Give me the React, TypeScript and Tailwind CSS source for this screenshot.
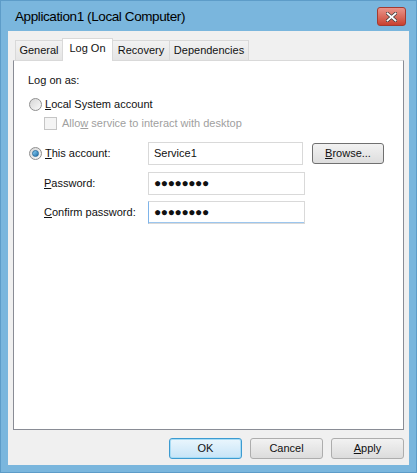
import React from "react";

const font = { fontFamily: '"Liberation Sans", Arial, sans-serif' };

function Radio({ checked }: { checked?: boolean }) {
  return (
    <span className="inline-flex h-[13px] w-[13px] shrink-0 items-center justify-center rounded-full border border-[#8f8f8f] bg-gradient-to-br from-[#d6d6d6] to-[#fafafa]">
      {checked && <span className="h-[7px] w-[7px] rounded-full border border-[#2a6fa0] bg-gradient-to-br from-[#8ad2f7] to-[#1c6fa8]" />}
    </span>
  );
}

function Dots() {
  return <span className="text-[12px] font-bold tracking-[-0.4px] text-[#111]">●●●●●●●●</span>;
}

function Btn({ children, primary }: { children: React.ReactNode; primary?: boolean }) {
  return (
    <div
      className={
        "h-[21px] w-[73px] rounded-[3px] flex items-center justify-center border " +
        (primary
          ? "border-[#3c9bd1] bg-gradient-to-b from-[#eaf6fd] to-[#c6e4f7] shadow-[inset_0_0_0_1px_#a7dcf5]"
          : "border-[#adadad] bg-gradient-to-b from-[#f2f2f2] to-[#dcdcdc]")
      }
    >
      {children}
    </div>
  );
}

export default function App() {
  return (
    <div style={font} className="w-[417px] h-[473px] bg-[#7ab6dd] border border-[#5d9cc8] flex flex-col text-[11px] leading-[15px] text-[#111]">
      {/* Title bar */}
      <div className="h-[30px] flex items-center justify-between pl-[14px] pr-[10px] shrink-0">
        <span className="text-[13.5px] tracking-[-0.4px] text-black">Application1 (Local Computer)</span>
        <div className="mt-[1px] h-[19px] w-[29px] rounded-[3px] border border-[#a33b30] bg-gradient-to-b from-[#e9948a] to-[#c8402f] flex items-center justify-center">
          <svg width="11" height="10" viewBox="0 0 11 10">
            <path d="M1.5 1.5 L9.5 8.5 M9.5 1.5 L1.5 8.5" stroke="#3a3a3a" strokeWidth="3.2" strokeLinecap="square" />
            <path d="M1.5 1.5 L9.5 8.5 M9.5 1.5 L1.5 8.5" stroke="#fff" strokeWidth="1.8" strokeLinecap="square" />
          </svg>
        </div>
      </div>

      {/* Client */}
      <div className="mx-[7px] mb-[7px] flex-1 bg-[#f0f0f0] flex flex-col px-[5px] pt-[7px]">
        {/* Tabs */}
        <div className="flex items-end h-[22px] pl-[2px]">
          <div className="h-[20px] w-[48px] border border-[#d9d9d9] border-b-0 bg-gradient-to-b from-[#f2f2f2] to-[#e5e5e5] flex items-center justify-center">General</div>
          <div className="relative z-10 -mb-px -ml-[1px] h-[23px] w-[51px] border border-[#d9d9d9] border-b-0 bg-white flex items-start justify-center pt-[2px]">Log On</div>
          <div className="-ml-[1px] h-[20px] w-[58px] border border-[#d9d9d9] border-b-0 bg-gradient-to-b from-[#f2f2f2] to-[#e5e5e5] flex items-center justify-center">Recovery</div>
          <div className="-ml-[1px] h-[20px] w-[80px] border border-[#d9d9d9] border-b-0 bg-gradient-to-b from-[#f2f2f2] to-[#e5e5e5] flex items-center justify-center">Dependencies</div>
        </div>

        {/* Panel */}
        <div className="h-[370px] border border-[#898c95] border-t-[#d9d9d9] bg-white px-[14px] pt-[12px]">
          <div>Log on as:</div>

          <div className="mt-[9px] flex items-center gap-[3px] ml-[1px]">
            <Radio />
            <span>
              <u>L</u>ocal System account
            </span>
          </div>
          <div className="mt-[4px] ml-[16px] flex items-center gap-[5px] text-[#a0a0a0]">
            <span className="h-[13px] w-[13px] border border-[#c5c5c5] bg-[#f4f4f4]" />
            <span>
              Allo<u>w</u> service to interact with desktop
            </span>
          </div>

          <div className="mt-[11px] flex items-center">
            <div className="flex items-center gap-[3px] ml-[1px] w-[119px]">
              <Radio checked />
              <span>
                <u>T</u>his account:
              </span>
            </div>
            <div className="h-[23px] w-[155px] border border-[#d9d9d9] bg-white px-[5px] flex items-center">Service1</div>
            <div className="ml-[9px] h-[21px] w-[72px] rounded-[3px] border border-[#707070] bg-gradient-to-b from-[#f2f2f2] to-[#dddddd] flex items-center justify-center">
              <span>
                <u>B</u>rowse...
              </span>
            </div>
          </div>

          <div className="mt-[7px] flex items-center">
            <div className="w-[120px] pl-[16px]">
              <u>P</u>assword:
            </div>
            <div className="h-[23px] w-[157px] border border-[#d9d9d9] bg-white px-[5px] flex items-center">
              <Dots />
            </div>
          </div>

          <div className="mt-[6px] flex items-center">
            <div className="w-[120px] pl-[16px]">
              <u>C</u>onfirm password:
            </div>
            <div className="h-[23px] w-[157px] border border-[#d9d9d9] border-l-[#7eb4ea] bg-white px-[5px] flex items-center shadow-[inset_0_-1px_0_#9cc6ee]">
              <Dots />
            </div>
          </div>
        </div>

        {/* Buttons */}
        <div className="mt-[8px] flex justify-end gap-[8px]">
          <Btn primary>OK</Btn>
          <Btn>Cancel</Btn>
          <Btn>
            <span>
              <u>A</u>pply
            </span>
          </Btn>
        </div>
      </div>
    </div>
  );
}
